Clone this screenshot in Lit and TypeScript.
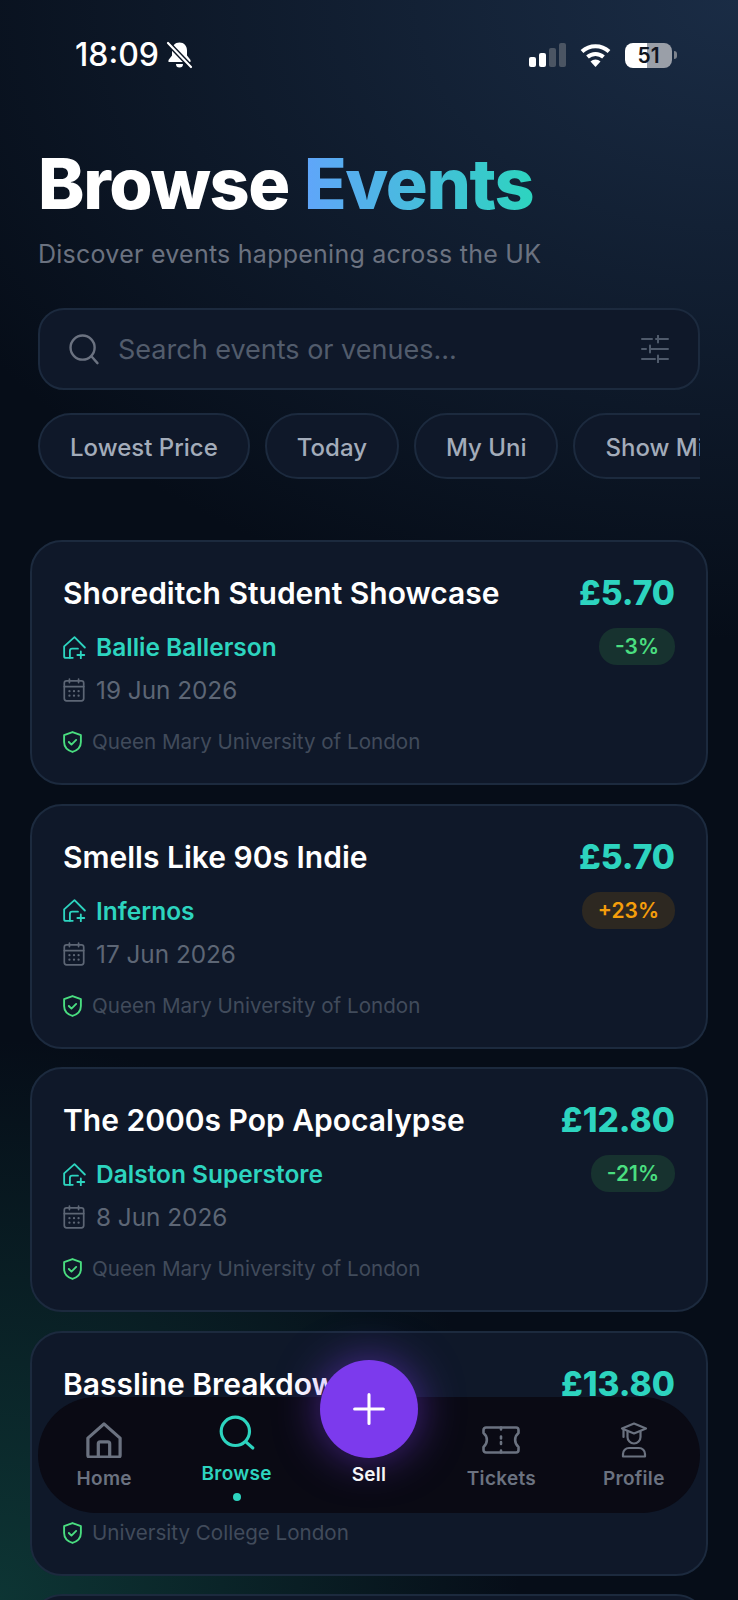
import {LitElement, html, css, svg} from 'lit'
import {customElement} from 'lit/decorators.js'
import {classMap} from 'lit/directives/class-map.js'

const events = [
  {title: 'Shoreditch Student Showcase', venue: 'Ballie Ballerson', date: '19 Jun 2026', uni: 'Queen Mary University of London', price: '£5.70', delta: '-3%', up: false},
  {title: 'Smells Like 90s Indie', venue: 'Infernos', date: '17 Jun 2026', uni: 'Queen Mary University of London', price: '£5.70', delta: '+23%', up: true},
  {title: 'The 2000s Pop Apocalypse', venue: 'Dalston Superstore', date: '8 Jun 2026', uni: 'Queen Mary University of London', price: '£12.80', delta: '-21%', up: false},
  {title: 'Bassline Breakdown', venue: 'Corsica Studios', date: '5 Jun 2026', uni: 'University College London', price: '£13.80', delta: '-8%', up: false},
]

const icon = (w: number, h: number, box: string, width: number, body: unknown) => html`
  <svg width=${w} height=${h} viewBox=${box} fill="none" stroke="currentColor"
    stroke-width=${width} stroke-linecap="round" stroke-linejoin="round">${body}</svg>`

const venueIcon = icon(23, 23, '2 2 20 20', 1.6, svg`
  <path d="M21 12 12 3 3 11v8.500A1.500 1.500 0 0 0 4.500 21h6"/>
  <path d="M8 21v-6a2 2 0 0 1 2-2h5"/>
  <path d="M17.500 15.500v6M14.500 18.500h6"/>`)
const calIcon = icon(22, 24, '2.500 1.500 19 21', 1.500, svg`
  <rect x="3.500" y="4" width="17" height="17.500" rx="2"/>
  <path d="M3.500 9h17M8 2.500v3M16 2.500v3"/>
  <path d="M8 13h.01M12 13h.01M16 13h.01M8 17h.01M12 17h.01M16 17h.01" stroke-width="2"/>`)
const shieldIcon = icon(19, 22, '3 1.500 18 21', 1.800, svg`
  <path d="M12 2.500 20 5.500v6.500c0 5-3.500 8-8 9.500-4.500-1.500-8-4.500-8-9.500V5.500z"/>
  <path d="m8.500 12 2.500 2.500 4.500-4.500"/>`)

@customElement('app-root')
export class AppRoot extends LitElement {
  static styles = css`
    :host {
      display: block;
      position: relative;
      height: 1600px;
      overflow: hidden;
      font-family: Inter, "Noto Sans", sans-serif;
      color: #fff;
      background:
        radial-gradient(900px 640px at 100% 0, #1a2c45 0%, rgba(26, 44, 69, 0) 100%),
        radial-gradient(520px 560px at 0 100%, #0d3534 0%, rgba(13, 53, 52, 0) 100%),
        #060d18;
    }
    svg { display: block; flex: none; }

    .status {
      display: flex;
      align-items: center;
      justify-content: space-between;
      padding: 36px 61px 0 75px;
      height: 38px;
    }
    .status-left, .status-right { display: flex; align-items: center; }
    .status-left { gap: 7px; }
    .status-right { gap: 14px; }
    .time { font-size: 32px; font-weight: 500; line-height: 38px; }
    .battery {
      position: relative;
      width: 47px;
      height: 25px;
      border-radius: 8px;
      overflow: hidden;
      background: linear-gradient(90deg, #fff 47%, #9a9fa8 47%);
      color: #10151f;
      font-size: 21px;
      font-weight: 600;
      line-height: 25px;
      text-align: center;
    }
    .battery-wrap { display: flex; align-items: center; gap: 2px; }
    .nub { width: 3px; height: 8px; border-radius: 0 3px 3px 0; background: #7d838d; }

    header { padding: 69px 38px 0; }
    h1 {
      margin: 0;
      font-size: 70px;
      font-weight: 800;
      line-height: 82px;
      letter-spacing: -1.350px;
      word-spacing: 1px;
    }
    h1 span {
      background: linear-gradient(90deg, #60a5fa, #2dd4bf);
      -webkit-background-clip: text;
      background-clip: text;
      color: transparent;
    }
    .sub { margin: 12px 0 0; font-size: 25px; line-height: 34px; color: #6b7280; letter-spacing: 0.250px; }

    .search {
      display: flex;
      align-items: center;
      gap: 17px;
      box-sizing: border-box;
      height: 82px;
      margin: 37px 38px 0;
      padding: 0 29px 0 27px;
      border: 2px solid #1c2a3e;
      border-radius: 26px;
      background: #0f1829;
      color: #6b7280;
    }
    .search .ph { flex: 1; font-size: 27px; color: #525c6c; }
    .search .tune { color: #4f5a6b; }

    .chips {
      display: flex;
      gap: 15px;
      margin: 23px 38px 0;
      overflow: hidden;
    }
    .chip {
      flex: none;
      box-sizing: border-box;
      height: 66px;
      padding: 0 30px;
      border: 2px solid #1c2a3e;
      border-radius: 33px;
      background: #0f1829;
      color: #a3acba;
      font-size: 24px;
      font-weight: 500;
      line-height: 65px;
    }

    .list {
      display: flex;
      flex-direction: column;
      gap: 18.600px;
      margin: 61px 30px 0;
    }
    .card {
      display: flex;
      justify-content: space-between;
      box-sizing: border-box;
      height: 245px;
      flex: none;
      padding: 31px 31px 0;
      border: 2px solid #1c2a3e;
      border-radius: 32px;
      background: #0f1829;
    }
    .title { font-size: 30px; font-weight: 600; line-height: 40px; }
    .row { display: flex; align-items: center; gap: 10px; }
    .venue { margin-top: 18px; font-size: 24.500px; font-weight: 600; line-height: 32px; color: #2dd4bf; }
    .date { gap: 11px; margin-top: 11px; font-size: 24.300px; line-height: 32px; color: #5d6675; }
    .uni { gap: 10px; margin-top: 21px; font-size: 20.600px; line-height: 30px; color: #414b5b; }
    .uni svg { color: #4ade80; }
    .side { display: flex; flex-direction: column; align-items: flex-end; }
    .price { font-size: 33.500px; font-weight: 800; line-height: 40px; color: #2dd4bf; }
    .badge {
      margin-top: 15px;
      padding: 0 16px;
      border-radius: 18px;
      font-size: 21px;
      font-weight: 600;
      line-height: 37px;
      color: #4ade80;
      background: #17322f;
    }
    .badge.up { color: #f59e0b; background: #2d2821; }

    nav {
      position: absolute;
      left: 38px;
      right: 38px;
      top: 1397px;
      height: 116px;
      display: flex;
      border-radius: 58px;
      background: #0a0a14;
    }
    .tab {
      flex: 1;
      display: flex;
      flex-direction: column;
      align-items: center;
      justify-content: center;
      box-sizing: border-box;
      padding-top: 3px;
      color: #6b7280;
      font-size: 19px;
      font-weight: 600;
      line-height: 24px;
      letter-spacing: 0.300px;
    }
    .tab span { margin-top: 9px; }
    .tab.active { color: #2dd4bf; }
    .dot { width: 8px; height: 8px; margin-top: 7px; border-radius: 50%; background: #2dd4bf; }
    .sell { justify-content: flex-start; margin-top: -37px; padding-top: 0; color: #f5f5f7; }
    .sell span { margin-top: 5px; }
    .fab {
      display: flex;
      align-items: center;
      justify-content: center;
      width: 98px;
      height: 98px;
      border-radius: 50%;
      background: #7c3aed;
      box-shadow: 0 0 44px rgba(124, 58, 237, 0.55);
      color: #fff;
    }
  `

  private statusBar() {
    return html`<div class="status">
      <div class="status-left">
        <div class="time">18:09</div>
        <svg width="27" height="28" viewBox="0 0 27 28">
          <path fill="#fff" d="M13.500 1.500c-4.500 0-7.500 3.500-7.500 8v5l-3.500 4.500v2h22v-2L21 14.500v-5c0-4.500-3-8-7.500-8zM10 23h7a3.500 3.500 0 0 1-7 0z"/>
          <path d="M2 2 25 26" stroke="#0c1523" stroke-width="5"/>
          <path d="M2 2 25 26" stroke="#fff" stroke-width="2.200" stroke-linecap="round"/>
        </svg>
      </div>
      <div class="status-right">
        <svg width="37" height="24" viewBox="0 0 37 24">
          <rect x="0" y="14" width="7" height="10" rx="2" fill="#fff"/>
          <rect x="10" y="10" width="7" height="14" rx="2" fill="#fff"/>
          <rect x="20" y="5" width="7" height="19" rx="2" fill="#4b5563"/>
          <rect x="30" y="0" width="7" height="24" rx="2" fill="#4b5563"/>
        </svg>
        <svg width="31" height="24" viewBox="0 0 31 24" fill="none" stroke="#fff" stroke-width="4">
          <path d="M2 8.500a20 20 0 0 1 27 0"/>
          <path d="M7.500 14a12 12 0 0 1 16 0"/>
          <path d="M15.500 24 10.500 18.500a7.500 7.500 0 0 1 10 0z" fill="#fff" stroke="none"/>
        </svg>
        <div class="battery-wrap">
          <div class="battery">51</div>
          <div class="nub"></div>
        </div>
      </div>
    </div>`
  }

  private card(e: typeof events[number]) {
    return html`<div class="card">
      <div>
        <div class="title">${e.title}</div>
        <div class="row venue">${venueIcon}${e.venue}</div>
        <div class="row date">${calIcon}${e.date}</div>
        <div class="row uni">${shieldIcon}${e.uni}</div>
      </div>
      <div class="side">
        <div class="price">${e.price}</div>
        <div class=${classMap({badge: true, up: e.up})}>${e.delta}</div>
      </div>
    </div>`
  }

  render() {
    return html`
      ${this.statusBar()}
      <header>
        <h1>Browse <span>Events</span></h1>
        <p class="sub">Discover events happening across the UK</p>
      </header>
      <div class="search">
        ${icon(34, 34, '0 0 24 24', 1.700, svg`<circle cx="11" cy="11" r="8.500"/><path d="m17.500 17.500 4 4.500"/>`)}
        <div class="ph">Search events or venues...</div>
        <div class="tune">
          ${icon(28, 28, '0 0 28 28', 2, svg`<path d="M1 4H11M15 4H27M17 0.500v7M1 14H5M9 14H27M9 10.500v7M1 24H14M18 24H27M17 20.500v7"/>`)}
        </div>
      </div>
      <div class="chips">
        <div class="chip">Lowest Price</div>
        <div class="chip">Today</div>
        <div class="chip">My Uni</div>
        <div class="chip">Show Mine</div>
      </div>
      <div class="list">
        ${events.map(e => this.card(e))}
        <div class="card"></div>
      </div>
      <nav>
        <div class="tab">
          ${icon(36, 36, '2.500 2.500 19 19', 1.700, svg`<path d="M3.500 11 12 3.500l8.500 7.500v9a1 1 0 0 1-1 1h-15a1 1 0 0 1-1-1z"/><path d="M9 21v-7a1 1 0 0 1 1-1h4a1 1 0 0 1 1 1v7"/>`)}
          <span>Home</span>
        </div>
        <div class="tab active">
          ${icon(40, 40, '0 0 24 24', 1.900, svg`<circle cx="11" cy="11" r="8.500"/><path d="m17.500 17.500 4 3.500"/>`)}
          <span>Browse</span>
          <div class="dot"></div>
        </div>
        <div class="tab sell">
          <div class="fab">${icon(46, 46, '0 0 24 24', 1.600, svg`<path d="M12 4.500v15M4.500 12h15"/>`)}</div>
          <span>Sell</span>
        </div>
        <div class="tab">
          ${icon(38, 36, '0 -4 38 36', 2.600, svg`<path d="M4 1.500H34a2.500 2.500 0 0 1 2.500 2.500v3a9 9 0 0 0 0 14v3a2.500 2.500 0 0 1-2.500 2.500H4a2.500 2.500 0 0 1-2.500-2.500v-3a9 9 0 0 0 0-14V4A2.500 2.500 0 0 1 4 1.500z"/><path d="M19 1.500v2M19 10.500v2M19 16v2M19 24.500v2"/>`)}
          <span>Tickets</span>
        </div>
        <div class="tab">
          ${icon(28, 36, '0 0 28 36', 2.200, svg`<path d="M14 1.500 26 6.500l-12 5-12-5z"/><path d="M3.500 7v8M7.500 9.500V15a6.500 6.500 0 1 0 13 0V9.500"/><path d="M3 34.500V32a6 6 0 0 1 6-6h10a6 6 0 0 1 6 6v2.500z"/>`)}
          <span>Profile</span>
        </div>
      </nav>
    `
  }
}
